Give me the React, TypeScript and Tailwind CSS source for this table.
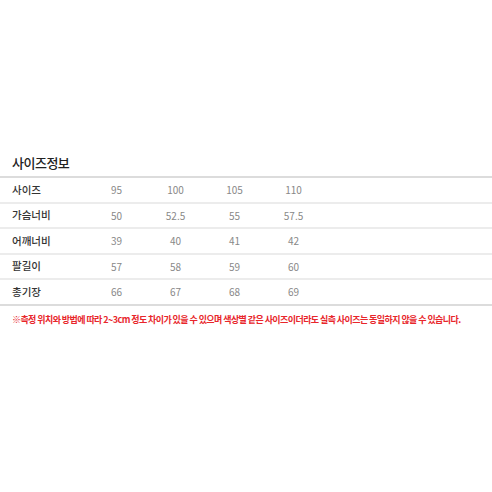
const rows: { label: string; values: string[] }[] = [
  { label: "사이즈", values: ["95", "100", "105", "110"] },
  { label: "가슴너비", values: ["50", "52.5", "55", "57.5"] },
  { label: "어깨너비", values: ["39", "40", "41", "42"] },
  { label: "팔길이", values: ["57", "58", "59", "60"] },
  { label: "총기장", values: ["66", "67", "68", "69"] },
];

export default function App() {
  return (
    <div
      className="w-[492px] h-[492px] bg-white pt-[152px]"
      style={{ fontFamily: '"Noto Sans CJK KR", "Noto Sans", sans-serif' }}
    >
      <h2 className="px-3 h-[24px] text-[13px] font-medium leading-[22px] text-[#222] tracking-[-0.5px]">
        사이즈정보
      </h2>
      <div className="border-t-2 border-[#dcdcdc]">
        {rows.map((row) => (
          <div
            key={row.label}
            className="grid grid-cols-[87px_59px_59px_59px_59px] h-[25.5px] items-center border-b-2 border-[#ececec] last:border-[#dcdcdc]"
          >
            <span className="pl-3 text-[10.5px] font-medium text-[#333]">{row.label}</span>
            {row.values.map((v, i) => (
              <span key={i} className="text-center text-[10px] text-[#888]">
                {v}
              </span>
            ))}
          </div>
        ))}
      </div>
      <p className="mt-[7px] px-3 text-[9px] font-semibold text-[#e8262b] tracking-[-0.58px] whitespace-nowrap">
        ※측정 위치와 방법에 따라 2~3cm 정도 차이가 있을 수 있으며 색상별 같은 사이즈이더라도 실측 사이즈는 동일하지 않을 수 있습니다.
      </p>
    </div>
  );
}
